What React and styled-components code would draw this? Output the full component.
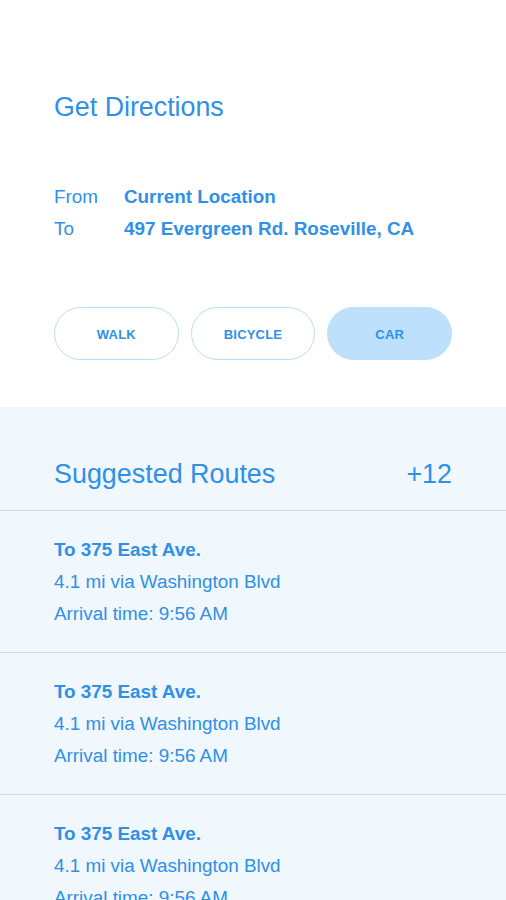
import React from 'react';
import styled, { createGlobalStyle } from 'styled-components';

const GlobalStyle = createGlobalStyle`
  body {
    margin: 0;
    background: #f0f7fd;
    font-family: "Liberation Sans", Arial, sans-serif;
    color: #2f90e8;
  }
`;

const Page = styled.div`
  width: 506px;
  min-height: 900px;
  background: #f0f7fd;
`;

const Top = styled.section`
  background: #fff;
  padding: 91px 54px 47px;
`;

const Title = styled.h1`
  margin: 0;
  font-size: 26.8px;
  font-weight: 400;
  line-height: 32px;
`;

const Places = styled.div`
  margin-top: 58px;
  display: grid;
  grid-template-columns: 70px 1fr;
  font-size: 18.85px;
  line-height: 32px;
`;

const Label = styled.span`
  font-weight: 400;
`;

const Value = styled.span`
  font-weight: 700;
`;

const Modes = styled.div`
  margin-top: 62px;
  display: flex;
  gap: 12px;
`;

const ModeButton = styled.button`
  width: 125px;
  height: 53px;
  border-radius: 27px;
  border: 1px solid ${p => (p.active ? '#bde0fc' : '#bcdcf5')};
  background: ${p => (p.active ? '#bde0fc' : '#fff')};
  color: #2f90e8;
  font-family: inherit;
  font-size: 13px;
  font-weight: 700;
  letter-spacing: 0.2px;
  padding: 2px 0 0;
`;

const Header = styled.div`
  display: flex;
  justify-content: space-between;
  padding: 51px 54px 20px;
  font-size: 26.9px;
  line-height: 32px;
  border-bottom: 1px solid #c6e1f6;
`;

const Route = styled.div`
  padding: 23px 54px 22px;
  font-size: 18.85px;
  line-height: 32px;
  border-bottom: 1px solid #c6e1f6;
`;

const RouteName = styled.div`
  font-weight: 700;
`;

const routes = [1, 2, 3].map(id => ({
  id,
  name: 'To 375 East Ave.',
  via: '4.1 mi via Washington Blvd',
  arrival: 'Arrival time: 9:56 AM',
}));

const modes = ['WALK', 'BICYCLE', 'CAR'];

export default function App() {
  return (
    <Page>
      <GlobalStyle />
      <Top>
        <Title>Get Directions</Title>
        <Places>
          <Label>From</Label>
          <Value>Current Location</Value>
          <Label>To</Label>
          <Value>497 Evergreen Rd. Roseville, CA</Value>
        </Places>
        <Modes>
          {modes.map(m => (
            <ModeButton key={m} active={m === 'CAR'}>
              {m}
            </ModeButton>
          ))}
        </Modes>
      </Top>
      <Header>
        <span>Suggested Routes</span>
        <span>+12</span>
      </Header>
      {routes.map(r => (
        <Route key={r.id}>
          <RouteName>{r.name}</RouteName>
          <div>{r.via}</div>
          <div>{r.arrival}</div>
        </Route>
      ))}
    </Page>
  );
}
